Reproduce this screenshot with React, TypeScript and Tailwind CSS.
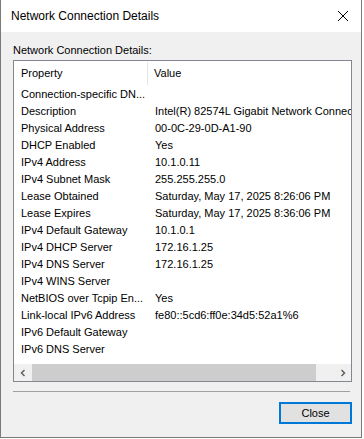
import React from "react";

const rows: [string, string][] = [
  ["Connection-specific DN...", ""],
  ["Description", "Intel(R) 82574L Gigabit Network Connection"],
  ["Physical Address", "00-0C-29-0D-A1-90"],
  ["DHCP Enabled", "Yes"],
  ["IPv4 Address", "10.1.0.11"],
  ["IPv4 Subnet Mask", "255.255.255.0"],
  ["Lease Obtained", "Saturday, May 17, 2025 8:26:06 PM"],
  ["Lease Expires", "Saturday, May 17, 2025 8:36:06 PM"],
  ["IPv4 Default Gateway", "10.1.0.1"],
  ["IPv4 DHCP Server", "172.16.1.25"],
  ["IPv4 DNS Server", "172.16.1.25"],
  ["IPv4 WINS Server", ""],
  ["NetBIOS over Tcpip En...", "Yes"],
  ["Link-local IPv6 Address", "fe80::5cd6:ff0e:34d5:52a1%6"],
  ["IPv6 Default Gateway", ""],
  ["IPv6 DNS Server", ""],
];

export default function App() {
  return (
    <div
      className="w-[364px] h-[439px] bg-white overflow-hidden text-black"
      style={{ fontFamily: '"Liberation Sans", Arial, sans-serif' }}
    >
      <div className="w-[362px] h-[438px] flex flex-col bg-[#f0f0f0] border-l border-r border-b border-[#7a7a7a]">
        {/* Title bar */}
        <div className="h-[32px] bg-white flex items-center justify-between pl-[10px] pr-[9px] shrink-0">
          <span className="text-[12px] leading-[16px]">Network Connection Details</span>
          <svg width="12" height="12" viewBox="0 0 12 12" className="mr-[3px]">
            <path d="M1 1 L11 11 M11 1 L1 11" stroke="#000" strokeWidth="1" />
          </svg>
        </div>
        {/* Body */}
        <div className="flex flex-col pl-[12px] pr-[9px]">
          <div className="mt-[10px] h-[16px] text-[11px] leading-[16px]">Network Connection Details:</div>
          <div className="mt-[2px] w-[339px] h-[322px] border border-[#828790] bg-white flex flex-col overflow-hidden">
            {/* header */}
            <div className="h-[25px] flex items-stretch text-[11px] shrink-0">
              <div className="w-[134px] shrink-0 pl-[7px] flex items-center border-r border-[#e5e5e5] mb-[1px] mt-[1px]">Property</div>
              <div className="pl-[6px] flex items-center">Value</div>
            </div>
            {rows.map(([k, v]) => (
              <div key={k} className="h-[17px] flex items-center text-[11px] whitespace-nowrap shrink-0">
                <div className="w-[135px] shrink-0 pl-[7px] overflow-hidden">{k}</div>
                <div className="pl-[6px] shrink-0">{v}</div>
              </div>
            ))}
            <div className="flex-1" />
            {/* horizontal scrollbar */}
            <div className="h-[17px] bg-[#f0f0f0] flex items-center shrink-0">
              <div className="w-[17px] h-[17px] flex items-center justify-center">
                <svg width="8" height="8" viewBox="0 0 8 8">
                  <path d="M5.5 1 L2.5 4 L5.5 7" stroke="#606060" strokeWidth="1.5" fill="none" />
                </svg>
              </div>
              <div className="ml-[1px] w-[284px] h-[17px] bg-[#cdcdcd]" />
              <div className="flex-1" />
              <div className="w-[17px] h-[17px] flex items-center justify-center">
                <svg width="8" height="8" viewBox="0 0 8 8">
                  <path d="M2.5 1 L5.5 4 L2.5 7" stroke="#606060" strokeWidth="1.5" fill="none" />
                </svg>
              </div>
            </div>
          </div>
          <div className="mt-[9px] w-[337px] h-[1px] bg-[#a0a0a0]" />
          <div className="flex justify-end mt-[10px]">
            <button className="w-[73px] h-[22px] border-2 border-[#0078d7] bg-[#e1e1e1] text-[11px] leading-[16px] flex items-center justify-center">
              Close
            </button>
          </div>
        </div>
      </div>
    </div>
  );
}
